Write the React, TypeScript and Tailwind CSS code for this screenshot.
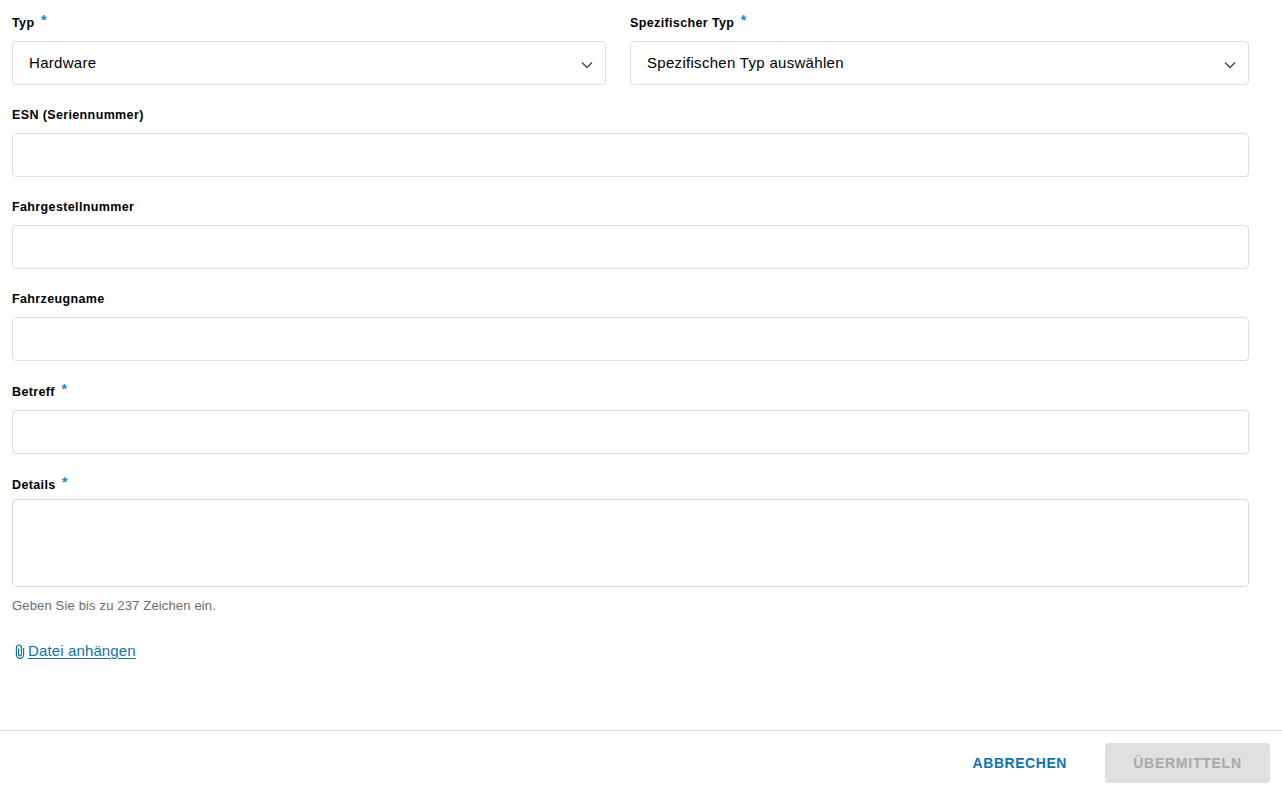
import React from "react";

const Req = () => <span className="ml-[6.5px] relative top-[-3px] text-[14px] leading-none font-bold text-[#1a86c8]">*</span>;

const Label = ({ children, req }: { children: React.ReactNode; req?: boolean }) => (
  <div className="h-[16px] pt-[2px] flex items-center text-[12.5px] leading-[14px] font-bold text-black tracking-[0.37px] whitespace-nowrap">
    {children}
    {req && <Req />}
  </div>
);

const Chevron = () => (
  <svg width="12" height="8" viewBox="0 0 12 8" fill="none" className="mt-[4px]">
    <path d="M1 1.5 L6 6.5 L11 1.5" stroke="#444444" strokeWidth="1.3" />
  </svg>
);

const Select = ({ value, label, className }: { value: string; label: string; className: string }) => (
  <div className={className}>
    <Label req>{label}</Label>
    <div className="mt-[11px] h-[44px] flex items-center justify-between pl-4 pr-3 border border-[#dedede] rounded bg-white">
      <span className="text-[15px] tracking-[0.3px] text-black">{value}</span>
      <Chevron />
    </div>
  </div>
);

const Field = ({ label, req }: { label: string; req?: boolean }) => (
  <div className="flex flex-col">
    <Label req={req}>{label}</Label>
    <div className="mt-[11px] h-[44px] border border-[#dedede] rounded bg-white" />
  </div>
);

export default function App() {
  return (
    <div className="w-[1282px] h-[795px] bg-white flex flex-col overflow-hidden font-['Liberation_Sans',Arial,sans-serif]">
      <div className="h-[730px] pl-3 w-[1249px] pt-[14px] flex flex-col">
        <div className="flex gap-6">
          <Select className="w-[594px]" label="Typ" value="Hardware" />
          <Select className="flex-1" label="Spezifischer Typ" value="Spezifischen Typ auswählen" />
        </div>
        <div className="mt-[21px] flex flex-col gap-[21px]">
          <Field label="ESN (Seriennummer)" />
          <Field label="Fahrgestellnummer" />
          <Field label="Fahrzeugname" />
        </div>
        <div className="mt-[22px]">
          <Field label="Betreff" req />
        </div>
        <div className="mt-[22px] flex flex-col">
          <Label req>Details</Label>
          <div className="mt-[7px] h-[88px] border border-[#dadada] rounded bg-white" />
          <div className="mt-[11px] text-[13px] leading-[16px] tracking-[0.16px] text-[#6b6b6b]">Geben Sie bis zu 237 Zeichen ein.</div>
        </div>
        <a className="mt-[27px] flex items-center text-[15px] leading-[20px] tracking-[0.13px] text-[#0f72b0]">
          <svg width="10" height="15" viewBox="0 0 10 15" fill="none" className="ml-[3px] mr-[3px]">
            <path d="M8.6 4 V10.8 A3.6 3.6 0 0 1 1.4 10.8 V3.6 A2.5 2.6 0 0 1 6.4 3.6 V10.4 A1.4 1.4 0 0 1 3.6 10.4 V4.5" stroke="#0f72b0" strokeWidth="1.2" />
          </svg>
          <span className="underline underline-offset-2">Datei anhängen</span>
        </a>
      </div>
      <div className="flex-1 border-t border-[#dedede] flex items-start justify-end pt-3 pr-3">
        <div className="h-[40px] flex items-center mr-[38px] text-[14px] font-bold tracking-[0.55px] text-[#0f72b0]">ABBRECHEN</div>
        <div className="w-[165px] h-[40px] flex items-center justify-center rounded bg-[#e0e0e0] text-[14px] font-bold tracking-[0.75px] text-[#a8a8a8]">ÜBERMITTELN</div>
      </div>
    </div>
  );
}
